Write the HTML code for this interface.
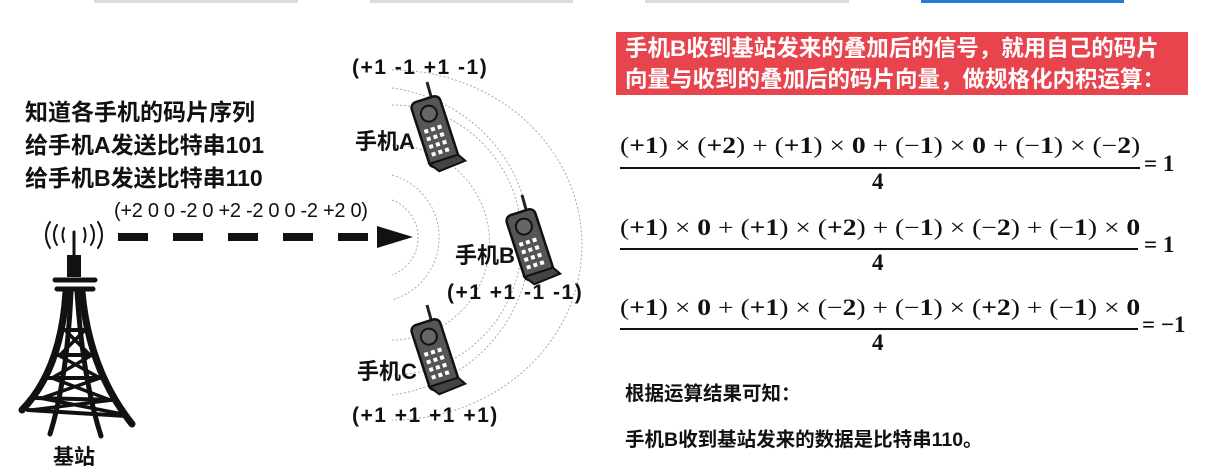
<!DOCTYPE html>
<html><head><meta charset="utf-8"><style>
body{margin:0;width:1206px;height:472px;background:#fff;position:relative;overflow:hidden;font-family:"Liberation Sans","Noto Sans CJK SC",sans-serif;}
.t{position:absolute;font-weight:bold;white-space:nowrap;color:#111;}
.bar{position:absolute;top:0;height:3px;background:#dcdcdc;}
.frac{position:absolute;font-family:"Liberation Serif","DejaVu Serif",serif;font-size:23px;color:#111;}
.frac .n{position:absolute;left:0;top:-3px;white-space:nowrap;transform:scaleX(1.2);transform-origin:0 0;}
.frac .l{position:absolute;left:0;height:1.5px;background:#111;}
.frac .d{position:absolute;font-weight:bold;}
.frac .e{position:absolute;white-space:nowrap;font-weight:bold;}
b{font-weight:bold}
</style></head><body>
<div class="bar" style="left:94px;width:204px"></div>
<div class="bar" style="left:370px;width:203px"></div>
<div class="bar" style="left:645px;width:204px"></div>
<div class="bar" style="left:921px;width:203px;background:#2a7ad6"></div>

<svg width="1206" height="472" style="position:absolute;left:0;top:0">
<defs>
<g id="ph">
<line x1="12" y1="0" x2="17" y2="18" stroke="#222" stroke-width="3"/>
<g transform="rotate(-18 22 50)">
<rect x="5" y="15" width="30" height="68" rx="6" fill="#555" stroke="#111" stroke-width="2.5"/>
<circle cx="20" cy="30" r="8" fill="#666" stroke="#111" stroke-width="2"/>
<g fill="#fff">
<rect x="10" y="44" width="4" height="4"/><rect x="17" y="44" width="4" height="4"/><rect x="24" y="44" width="4" height="4"/>
<rect x="10" y="52" width="4" height="4"/><rect x="17" y="52" width="4" height="4"/><rect x="24" y="52" width="4" height="4"/>
<rect x="10" y="60" width="4" height="4"/><rect x="17" y="60" width="4" height="4"/><rect x="24" y="60" width="4" height="4"/>
<rect x="10" y="68" width="4" height="4"/><rect x="17" y="68" width="4" height="4"/><rect x="24" y="68" width="4" height="4"/>
</g>
<path d="M5 78 L35 78 L40 86 L12 88 Z" fill="#444" stroke="#111" stroke-width="2"/>
</g>
</g>
</defs>
<g fill="none" stroke="#aaa" stroke-width="1" stroke-dasharray="2,2">
<path d="M392 200 A40 40 0 0 1 392 275"/>
<path d="M392 175 A65 65 0 0 1 392 300"/>
<path d="M392 145 A95 95 0 0 1 392 340"/>
<path d="M392 105 A130 135 0 0 1 392 375"/>
<path d="M392 88 A160 155 0 0 1 392 395"/>
<path d="M392 70 A190 175 0 0 1 392 420"/>
</g>
<use href="#ph" x="415" y="82"/>
<use href="#ph" x="510" y="195"/>
<use href="#ph" x="415" y="305"/>
<g fill="#111">
<rect x="118" y="233" width="30" height="8"/><rect x="173" y="233" width="30" height="8"/><rect x="228" y="233" width="30" height="8"/><rect x="283" y="233" width="30" height="8"/><rect x="338" y="233" width="30" height="8"/>
<polygon points="377,226 377,248 413,237"/>
</g>
<g stroke="#111" fill="none" stroke-linecap="round">
<path d="M50 222 Q42 235 50 248 M57 225 Q51 235 57 245 M64 228 Q61 235 64 242 M84 228 Q87 235 84 242 M91 225 Q97 235 91 245 M98 222 Q106 235 98 248" stroke-width="2"/>
<line x1="74" y1="232" x2="74" y2="258" stroke-width="3"/>
<rect x="67" y="255" width="14" height="22" fill="#111" stroke="none"/>
<path d="M55 280 L95 280 M57 289 L93 289" stroke-width="5"/>
<path d="M66 292 Q61 370 22 410" stroke-width="7"/>
<path d="M82 292 Q89 370 132 424" stroke-width="7"/>
<path d="M71 292 Q67 380 50 434" stroke-width="5"/>
<path d="M77 292 Q83 380 101 436" stroke-width="5"/>
<path d="M63 330 L87 330 M57 355 L93 355 M48 378 L104 378 M36 398 L116 400 M28 410 L126 416" stroke-width="4"/>
<path d="M65 330 L90 355 M85 330 L60 355 M58 355 L100 378 M92 355 L52 378 M52 378 L110 400 M100 378 L42 398 M40 398 L122 414 M112 400 L32 410" stroke-width="3.5"/>
</g>
</svg>

<div class="t" style="left:25px;top:93px;font-size:23px">知道各手机的码片序列</div>
<div class="t" style="left:25px;top:126px;font-size:23px">给手机A发送比特串101</div>
<div class="t" style="left:25px;top:159px;font-size:23px">给手机B发送比特串110</div>
<div class="t" style="left:114px;top:200px;font-size:20px;font-weight:normal;letter-spacing:-0.3px">(+2 0 0 -2 0 +2 -2 0 0 -2 +2 0)</div>
<div class="t" style="left:53px;top:441px;font-size:21px">基站</div>

<div class="t" style="left:352px;top:56px;font-size:21px;letter-spacing:1.5px">(+1 -1 +1 -1)</div>
<div class="t" style="left:355px;top:124px;font-size:22px">手机A</div>
<div class="t" style="left:455px;top:238px;font-size:22px">手机B</div>
<div class="t" style="left:447px;top:281px;font-size:21px;letter-spacing:1.5px">(+1 +1 -1 -1)</div>
<div class="t" style="left:357px;top:354px;font-size:22px">手机C</div>
<div class="t" style="left:352px;top:404px;font-size:21px;letter-spacing:1.5px">(+1 +1 +1 +1)</div>

<div style="position:absolute;left:616px;top:32px;width:572px;height:63px;background:#e8444e;"></div>
<div class="t" style="left:625px;top:33px;font-size:22.5px;color:#fff;line-height:31px">手机B收到基站发来的叠加后的信号，就用自己的码片<br>向量与收到的叠加后的码片向量，做规格化内积运算：</div>

<div class="frac" style="left:620px;top:136px">
<div class="n">(<b>+1</b>) × (<b>+2</b>) + (<b>+1</b>) × <b>0</b> + (−<b>1</b>) × <b>0</b> + (−<b>1</b>) × (−<b>2</b>)</div>
<div class="l" style="top:31px;width:520px"></div>
<div class="d" style="left:252px;top:33px">4</div>
<div class="e" style="left:524px;top:15px">= 1</div>
</div>
<div class="frac" style="left:620px;top:218px">
<div class="n">(<b>+1</b>) × <b>0</b> + (<b>+1</b>) × (<b>+2</b>) + (−<b>1</b>) × (−<b>2</b>) + (−<b>1</b>) × <b>0</b></div>
<div class="l" style="top:30px;width:518px"></div>
<div class="d" style="left:252px;top:32px">4</div>
<div class="e" style="left:524px;top:14px">= 1</div>
</div>
<div class="frac" style="left:620px;top:298px">
<div class="n">(<b>+1</b>) × <b>0</b> + (<b>+1</b>) × (−<b>2</b>) + (−<b>1</b>) × (<b>+2</b>) + (−<b>1</b>) × <b>0</b></div>
<div class="l" style="top:30px;width:518px"></div>
<div class="d" style="left:252px;top:32px">4</div>
<div class="e" style="left:522px;top:14px">= −1</div>
</div>

<div class="t" style="left:625px;top:377px;font-size:19.5px">根据运算结果可知：</div>
<div class="t" style="left:625px;top:423px;font-size:19.5px">手机B收到基站发来的数据是比特串110。</div>
</body></html>
